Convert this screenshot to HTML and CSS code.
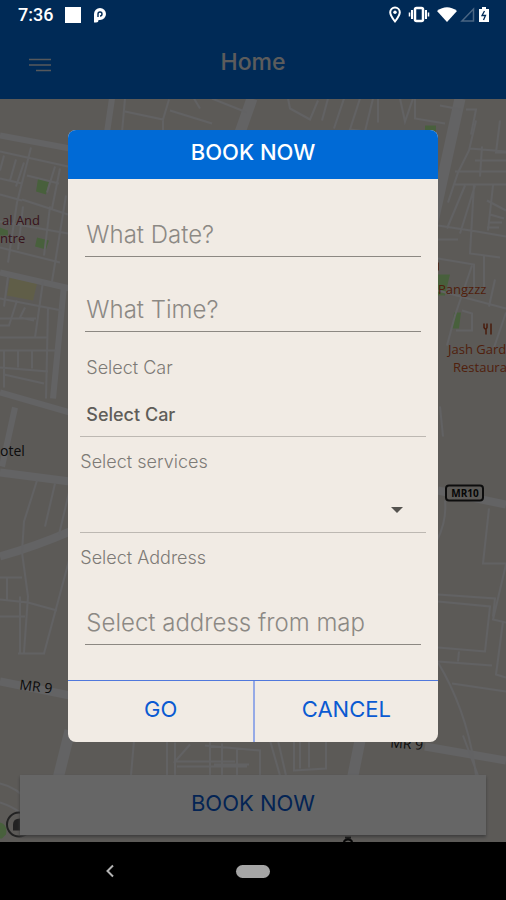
FILE: index.html
```
<!DOCTYPE html>
<html lang="en">
<head>
<meta charset="utf-8">
<meta name="viewport" content="width=device-width, initial-scale=1">
<title>Home</title>
<link rel="stylesheet" href="styles.css">
</head>

<body>
<div class="screen">
	<div class="status">
		<span class="time">7:36</span>
		<span class="square"></span>
		<svg class="park" width="14" height="17" viewBox="0 0 14 17"><path d="M1 15.500V7a6 6 0 1 1 6 6H5.500q0 2.500-2.500 2.500z" fill="#fff"/><path d="M5 10V7a2 2 0 1 1 2 2" fill="none" stroke="#002a56" stroke-width="1.400"/></svg>
		<div class="status-right">
			<svg width="12" height="18" viewBox="0 0 12 18"><path d="M6 1.500a4.800 4.800 0 0 0-4.800 4.800C1.200 9.500 6 15.500 6 15.500s4.800-6 4.800-9.200A4.800 4.800 0 0 0 6 1.500z" fill="none" stroke="#fff" stroke-width="2"/><circle cx="6" cy="6.300" r="1.700" fill="#fff"/></svg>
			<svg width="22" height="18" viewBox="0 0 22 18"><rect x="7" y="2" width="8" height="13" rx="1.500" fill="none" stroke="#fff" stroke-width="2.500"/><path d="M4 4v9M18 4v9" stroke="#fff" stroke-width="2"/><path d="M1.500 6.500v4M20.500 6.500v4" stroke="#fff" stroke-width="1.500"/></svg>
			<svg width="20" height="18" viewBox="0 0 20 18"><path d="M0 5Q10-2.500 20 5L10 16z" fill="#fff"/></svg>
			<svg width="15" height="18" viewBox="0 0 15 18"><path d="M13.500 3v12H2z" fill="none" stroke="#4a6683" stroke-width="1.500"/></svg>
			<svg width="12" height="18" viewBox="0 0 12 18"><path d="M4 1h4v2h3v13H1V3h3z" fill="#fff"/><path d="M6.500 5L4 9.500h3.500L5.500 14" fill="none" stroke="#002a56" stroke-width="1.300"/></svg>
		</div>
	</div>

	<header class="header">
		<button class="menu" type="button" aria-label="Menu">
			<svg width="24" height="14" viewBox="0 0 24 14"><path d="M1 1.500h22M1 7h22M8 12.500h15" stroke="#d8dde5" stroke-width="1.500"/></svg>
		</button>
		<h1>Home</h1>
	</header>

	<main class="content">
		<svg class="map" viewBox="0 98 506 744" preserveAspectRatio="xMidYMid slice">
			<rect y="98" width="506" height="744" fill="#e6e1da"/>
			<!-- blocks -->
			<path d="M38 178l11 3-3 13-10-3zM37 237l12 3-3 9-11-3zM0 227l8 3v5H0zM425 125h11v6h-11zM438 274h12l-5 21h-7zM454 312h7l-2 16h-7zM0 822q8 2 6 12l-4 4H0z" fill="#b4f096"/>
			<path d="M10 277l27 6-4 17-26-5z" fill="#f0ebb4"/>
			<!-- main roads -->
			<g fill="none" stroke="#f7f7fa" stroke-width="6">
				<path d="M0 135L70 148M112 98l-5 34M0 272L70 288M0 392L70 412M15 407L2 466M64 285L53 398"/>
				<path d="M0 556Q35 546 70 531M0 472L70 481M438 490l68 14M0 681L70 695M425 746l81 14" stroke-width="8"/>
				<path d="M252 98l-12 34M460 98L430 235M70 730L55 790M360 740l-8 40" stroke-width="11"/>
			</g>
			<!-- streets -->
			<g fill="none" stroke="#f4f4f8" stroke-width="2">
				<path d="M0 151l68 15M31 147L17 202M4 155l-4 15M16 159l-6 21M0 178l22 5M24 162l-8 24M55 166l-8 26M27 175l32 8M22 199l46 15M0 194l22 6M17 202L8 262M60 168l-8 40M66 195L52 281M0 247l60 15M50 206l-6 49"/>
				<path d="M0 221l68 12M23 206l-5 43M43 281l-8 56M8 276l-4 30M0 298l62 12M17 300L9 325H0M25 307l-5 10 14 3M0 318h36M0 337h47M48 308l-2 90M0 350h56M4 350v37M18 350v17M32 350v18M0 367l48 4M4 374l40 9"/>
				<path d="M37 480L24 521 22 552 28 596 24 652M55 483L45 526M69 492L59 534M69 560L44 653M0 577h22M7 577v22M0 599l28 3 29 8M0 616h25M20 596v56M18 653h27"/>
				<path d="M125 98l-3 34M125 111l38 8 6-20M163 119v12M170 110l42 13M194 98l6 10M212 98l35 14M288 98l2 10 20 11 8-19M328 98l-6 22M344 98l-10 30M360 98l-10 31 15 2 8-33M378 98v24M400 98l5 23 8-23M415 98v20l30 5M466 109h10l-5 25"/>
				<path d="M440 105l21 4M455 171h51M455 184h51M476 120l-7 30-11 22-10 30M500 120l-4 32h10M470 148l36 3M482 146l-2 30M475 160h31M465 185l-18 43M475 185l-15 48M438 225l39 6 29 5M474 184l-4 69 30 4M493 185l-5 45M487 200l19 10M490 214l14 4M488 222h14M487 227h12M438 239h20M438 258l36 6v25M484 255v35M438 290l68 18M472 265l-17 50-8 30M495 279l-6 27M462 310l10 3v17h-16M506 312l-12 35"/>
				<path d="M445 500q2 20-8 40M489 508l-6 55h23M506 564l-13 55 13 3M438 594l57 4-2 18M438 601l52 5-5 45-47-4M459 651l-1 10M438 661l54 4M503 621l-7 53 10 3M438 662q30 50 38 113M452 683l54 8M463 735l15 40M440 406l3 30"/>
				<path d="M0 783q18 4 30 20M0 802q12 4 20 10M134 740l-3 35M167 740v35M175 742v33M190 744l-15 17h60M177 766h70M205 745l55 5v28M210 740v35M222 743v32M237 748v27M249 764h-35M270 740l10 35M278 740l8 35M294 740v30l32-2v-28M300 740v28M309 740v27"/>
			</g>
			<g class="place">
				<text x="2" y="224">al And</text>
				<text x="0" y="242">ntre</text>
			</g>
			<g class="place food">
				<text x="438" y="293">Pangzzz</text>
				<text x="448" y="353">Jash Gard</text>
				<text x="453" y="371">Restaura</text>
				<path d="M484 323v4q2 3 3 0v-4M486 328v6M491 323v11M438 262v8" fill="none" stroke="#b4461e" stroke-width="1.500"/>
			</g>
			<g class="road">
				<text x="0" y="455">otel</text>
				<text x="19" y="689" transform="rotate(7 19 689)">MR 9</text>
				<text x="390" y="747" transform="rotate(4 390 747)">MR 9</text>
			</g>
			<path d="M345 837h6M344 842q0-3 4-3t4 3" fill="none" stroke="#111" stroke-width="2"/>
			<rect x="446" y="485" width="37" height="15" rx="3" fill="#e6e1da" stroke="#222" stroke-width="2"/>
			<text x="465" y="496" text-anchor="middle" class="badge">MR10</text>
			<circle cx="19" cy="824" r="12" fill="#e6e1da" stroke="#555" stroke-width="2"/>
			<path d="M13 830v-6q0-6 7-6v12z" fill="#555"/>
		</svg>
		<button class="book" type="button">BOOK NOW</button>
	</main>

	<div class="overlay">
		<form class="modal">
			<h2>BOOK NOW</h2>
			<div class="fields">
				<input class="line-input" type="text" placeholder="What Date?" aria-label="What Date?">
				<input class="line-input" type="text" placeholder="What Time?" aria-label="What Time?">
				<div class="group first">
					<label for="car">Select Car</label>
					<select class="car" id="car"><option>Select Car</option></select>
				</div>
				<div class="group">
					<label for="services">Select services</label>
					<div class="drop">
						<select id="services"><option></option></select>
						<span class="arrow"></span>
					</div>
				</div>
				<div class="group address">
					<label for="address">Select Address</label>
					<input class="line-input" type="text" id="address" placeholder="Select address from map">
				</div>
			</div>
			<div class="actions">
				<button type="button">GO</button>
				<button type="button">CANCEL</button>
			</div>
		</form>
	</div>

	<nav class="navbar">
		<button class="back" type="button" aria-label="Back">
			<svg width="10" height="14" viewBox="0 0 10 14"><path d="M8 1.500L2.500 7 8 12.500" fill="none" stroke="#b4b4b4" stroke-width="2"/></svg>
		</button>
		<button class="home" type="button" aria-label="Home"></button>
		<span></span>
	</nav>
</div>
</body>
</html>
```
FILE: styles.css
```
*{ margin:0; padding:0; box-sizing:border-box;}
body{ font-family:Inter, "Liberation Sans", sans-serif; background:#000;}
button, input, select{ font-family:inherit; border:0; border-radius:0; background:none; outline:0;}
.screen{ min-height:100vh; display:flex; flex-direction:column; position:relative;}

/* status bar stays bright above the overlay */
.status{ height:30px; padding:0 16px 0 18px; display:flex; align-items:center; gap:12px; background:#002a56; color:#fff; position:relative; z-index:3;}
.time{ font:500 18px/30px Roboto, sans-serif;}
.square{ width:16px; height:16px; background:#fff;}
.status-right{ margin-left:auto; display:flex; gap:3px;}
.status-right svg:nth-child(-n+2){ margin-right:4px;}

.header{ height:69px; padding:0 28px; display:grid; grid-template-columns:1fr auto 1fr; align-items:center; background:#006ad6;}
.header h1{ padding-bottom:6px; font-size:23px; font-weight:500; color:#e6e6e6;}
.menu{ width:24px; height:14px;}
.menu svg{ display:block;}

.content{ flex:1; padding:0 20px 7px; display:flex; align-items:flex-end; position:relative; overflow:hidden;}
.map{ position:absolute; left:0; top:0; width:100%; height:100%;}
.place{ font:500 13px "Open Sans", sans-serif; fill:#8c3246;}
.food{ fill:#c8501e;}
.road{ font:500 14px "Open Sans", sans-serif; fill:#222;}
.badge{ font:bold 10px "Open Sans", sans-serif; fill:#111;}
.book{ width:100%; height:60px; padding-bottom:4px; font-size:22px; font-weight:400; color:#0a5ad2; background:#fff; box-shadow:0 2px 3px #999; position:relative;}

.overlay{ position:absolute; left:0; right:0; top:0; bottom:58px; padding-top:30px; display:flex; align-items:center; justify-content:center; background:rgba(0,0,0,.6); z-index:2;}
.modal{ width:73%; border-radius:8px; overflow:hidden; background:#f1ebe4;}
.modal h2{ height:49px; font-size:22px; font-weight:500; line-height:45px; text-align:center; color:#fff; background:#006ad6;}
.fields{ padding:34px 12px 35px; display:flex; flex-direction:column;}
.line-input{ height:44px; margin:0 5px 31px; padding:0 1px; font-size:24px; font-weight:300; color:#55534f; border-bottom:1px solid #8c8882;}
.line-input::placeholder{ color:#8c8984; opacity:1;}
.group{ display:flex; flex-direction:column;}
.group label{ font-size:18px; font-weight:300; line-height:50px; color:#7d7a76;}
.group select{ width:100%; appearance:none; border-bottom:1px solid #bdb8b2;}
.first{ margin-top:-20px;}
.first label{ padding-left:6px;}
.group .car{ height:44px; padding:0 6px; font-size:18px; font-weight:500; color:#5f5d59;}
.drop{ display:grid; align-items:center;}
.drop select{ height:46px; grid-area:1 / 1;}
.arrow{ grid-area:1 / 1; justify-self:end; margin-right:23px; border:6px solid transparent; border-top-color:#55534f; border-bottom:0; pointer-events:none;}
.address .line-input{ margin-top:18px; margin-bottom:0;}
.actions{ display:grid; grid-template-columns:1fr 1fr; border-top:1px solid #5078dc;}
.actions button{ height:61px; padding-bottom:6px; font-size:22px; font-weight:400; color:#0a5ad2;}
.actions button + button{ border-left:2px solid #96aae6;}

.navbar{ height:58px; display:grid; grid-template-columns:1fr auto 1fr; align-items:center; background:#000;}
.back{ justify-self:center; margin-right:16px; width:10px; height:14px;}
.back svg{ display:block;}
.home{ width:34px; height:13px; border-radius:7px; background:#a5a5a5;}
```
